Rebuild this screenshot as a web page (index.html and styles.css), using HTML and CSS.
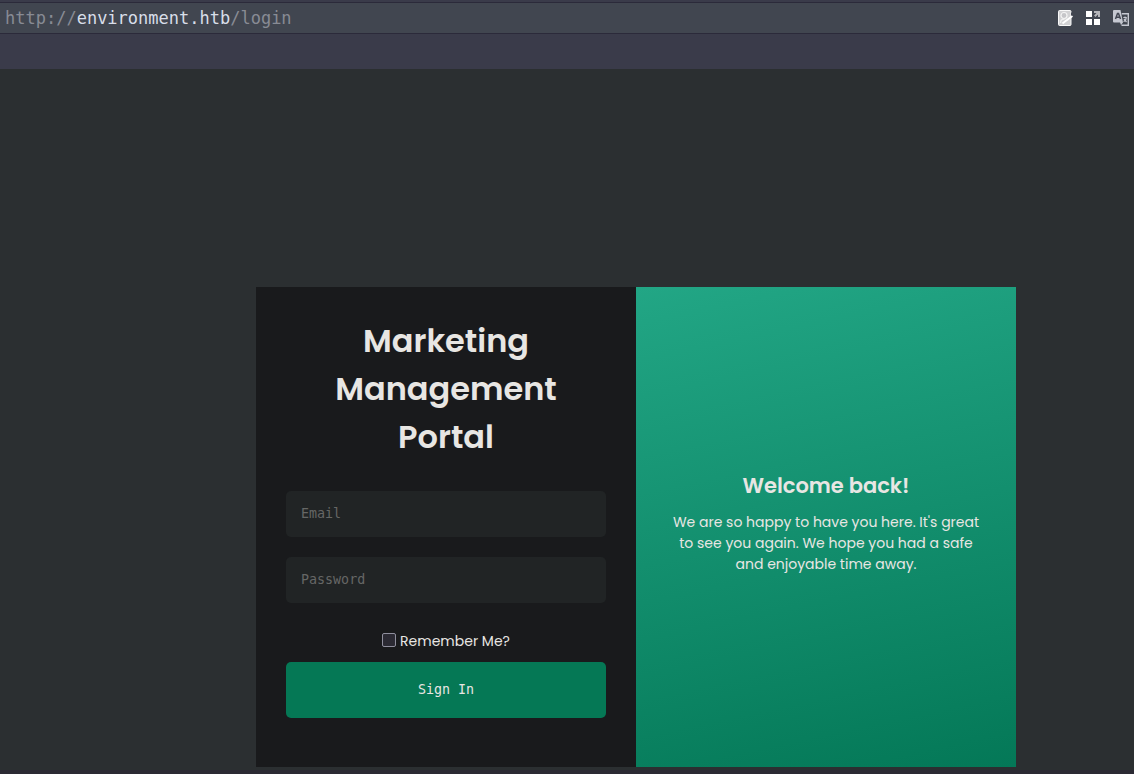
FILE: index.html
```html
<!DOCTYPE html>
<html lang="en">
<head>
  <meta charset="utf-8">
  <meta name="viewport" content="width=device-width, initial-scale=1">
  <title>Login</title>
  <link rel="stylesheet" href="styles.css">
</head>
<body>
  <header class="browser">
    <div class="address-bar">
      <div class="url">http://<span class="url-host">environment.htb</span>/login</div>
      <div class="tools">
        <button class="tool" type="button" aria-label="Reader notes">
          <svg width="16" height="16" viewBox="0 0 16 16">
            <rect x="1.500" y="0.500" width="12.500" height="15" rx="1" fill="#d2d2d4" stroke="#f8f8f8"/>
            <circle cx="7" cy="5.500" r="3" fill="#c6c6c9" stroke="#f4f4f4" stroke-width="1.200"/>
            <path d="M3.500 13c0-3 1.500-4 4-4" fill="none" stroke="#f0f0f0" stroke-width="1.300"/>
            <path d="M15.500 6 8 11.500l-2.500 2" fill="none" stroke="#fff" stroke-width="2"/>
            <path d="M14.500 2.500v3" stroke="#424652" stroke-width="1"/>
          </svg>
        </button>
        <button class="tool" type="button" aria-label="Extensions">
          <svg width="16" height="16" viewBox="0 0 16 16">
            <path d="M1 1h6v6H1zM1 9h6v6H1zM9 9h6v6H9z" fill="#fff"/>
            <path d="M9 1h6v6h-2V4.500L10.500 7 9 5.500 11.500 3H9z" fill="#b4b5b9"/>
          </svg>
        </button>
        <button class="tool" type="button" aria-label="Translate">
          <svg width="16" height="16" viewBox="0 0 16 16">
            <path d="M1 0h6.500L10 12.500l-2 2.500L7 12.500H1a1 1 0 0 1-1-1V1a1 1 0 0 1 1-1z" fill="#c5c8d1"/>
            <path d="M2.500 9 4.500 3.500h1L7.500 9M3.200 7.300h3.600" fill="none" stroke="#424652" stroke-width="1.500"/>
            <path d="M8.800 3.700h6.500v11.600H8.500" fill="none" stroke="#c5c8d1" stroke-width="1.400"/>
            <path d="M10.300 7.500h3.500M12 6.500v1M13.200 7.500c0 2-1.200 3.500-2.700 4M11 9l2.500 3" fill="none" stroke="#c5c8d1" stroke-width="1.200"/>
          </svg>
        </button>
      </div>
    </div>
  </header>
  <main class="page">
    <div class="card">
      <form class="login">
        <h1 class="title">Marketing Management Portal</h1>
        <div class="fields">
          <input class="field" type="email" placeholder="Email" aria-label="Email">
          <input class="field" type="password" placeholder="Password" aria-label="Password">
        </div>
        <label class="remember"><input class="check" type="checkbox">Remember Me?</label>
        <button class="submit" type="submit">Sign In</button>
      </form>
      <section class="welcome">
        <h2 class="welcome-title">Welcome back!</h2>
        <p class="welcome-text">We are so happy to have you here. It's great to see you again. We hope you had a safe and enjoyable time away.</p>
      </section>
    </div>
  </main>
  <footer class="frame-edge"></footer>
</body>
</html>
```
FILE: styles.css
```css
* { box-sizing: border-box; }
body {
  display: flex;
  flex-direction: column;
  min-height: 100vh;
  margin: 0;
  background: #2b2f31;
  color: #e8e6e3;
  font-family: Poppins, Inter, sans-serif;
  font-size: 14px;
}
.browser {
  height: 69px;
  padding-top: 2px;
  background: #3a3b4a;
}
.address-bar {
  display: flex;
  align-items: center;
  justify-content: space-between;
  height: 32px;
  padding: 0 5px;
  border-top: 1px solid #2b2a3a;
  border-bottom: 1px solid #2b2a3a;
  background: #414650;
}
.url {
  color: #888b94;
  font-family: "DejaVu Sans Mono", monospace;
  font-size: 17px;
}
.url-host { color: #d8dee9; }
.tools { display: flex; gap: 12px; }
.tool {
  display: block;
  padding: 0;
  border: 0;
  background: none;
}
.tool svg { display: block; }
.page {
  flex: 1;
  padding: 218px 118px 3px 256px;
}
.card {
  display: grid;
  grid-template-columns: 1fr 1fr;
  min-height: 480px;
}
.login {
  display: flex;
  flex-direction: column;
  padding: 30px;
  background: #191a1c;
  text-align: center;
}
.title {
  margin: 0 40px 30px;
  font-size: 32px;
  font-weight: 600;
  line-height: 48px;
}
.fields { display: grid; gap: 20px; }
.field {
  width: 100%;
  height: 46px;
  padding: 0 15px 2px;
  border: 0;
  border-radius: 5px;
  background: #212425;
  color: #e8e6e3;
  font-family: "DejaVu Sans Mono", monospace;
}
.field::placeholder { color: #666765; }
.remember {
  display: flex;
  align-items: center;
  justify-content: center;
  gap: 4px;
  margin: 27px 0 9px;
  line-height: 23px;
}
.check {
  width: 14px;
  height: 14px;
  margin: 0 0 4px;
  appearance: none;
  border: 1px solid #8f8f9d;
  border-radius: 2px;
  background: #2b2a33;
}
.check:checked { background: #057855; }
.submit {
  height: 56px;
  padding: 0 0 2px;
  border: 0;
  border-radius: 5px;
  background: #057855;
  color: #e8e6e3;
  font-family: "DejaVu Sans Mono", monospace;
}
.welcome {
  display: flex;
  flex-direction: column;
  justify-content: center;
  padding: 30px;
  background: linear-gradient(168deg, #22a685, #047857);
  text-align: center;
}
.welcome-title {
  margin: 0 0 10px;
  font-size: 21px;
  font-weight: 600;
  line-height: 32px;
}
.welcome-text {
  margin: 0 0 10px;
  line-height: 21px;
}
.frame-edge {
  height: 4px;
  background: #2b2a33;
}
```
